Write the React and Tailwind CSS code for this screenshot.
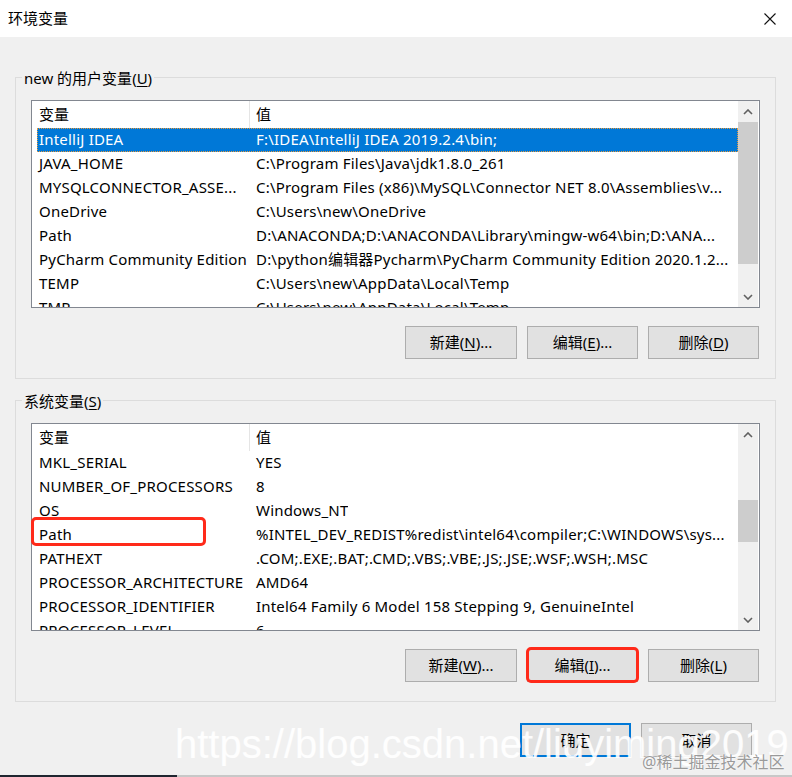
import React from "react";

const FONT = { fontFamily: "'Noto Sans', 'Noto Sans CJK SC', sans-serif" };

const userRows = [
  ["IntelliJ IDEA", "F:\\IDEA\\IntelliJ IDEA 2019.2.4\\bin;"],
  ["JAVA_HOME", "C:\\Program Files\\Java\\jdk1.8.0_261"],
  ["MYSQLCONNECTOR_ASSE...", "C:\\Program Files (x86)\\MySQL\\Connector NET 8.0\\Assemblies\\v..."],
  ["OneDrive", "C:\\Users\\new\\OneDrive"],
  ["Path", "D:\\ANACONDA;D:\\ANACONDA\\Library\\mingw-w64\\bin;D:\\ANA..."],
  ["PyCharm Community Edition", "D:\\python编辑器Pycharm\\PyCharm Community Edition 2020.1.2..."],
  ["TEMP", "C:\\Users\\new\\AppData\\Local\\Temp"],
  ["TMP", "C:\\Users\\new\\AppData\\Local\\Temp"],
];

const sysRows = [
  ["MKL_SERIAL", "YES"],
  ["NUMBER_OF_PROCESSORS", "8"],
  ["OS", "Windows_NT"],
  ["Path", "%INTEL_DEV_REDIST%redist\\intel64\\compiler;C:\\WINDOWS\\sys..."],
  ["PATHEXT", ".COM;.EXE;.BAT;.CMD;.VBS;.VBE;.JS;.JSE;.WSF;.WSH;.MSC"],
  ["PROCESSOR_ARCHITECTURE", "AMD64"],
  ["PROCESSOR_IDENTIFIER", "Intel64 Family 6 Model 158 Stepping 9, GenuineIntel"],
  ["PROCESSOR_LEVEL", "6"],
];

function Chevron({ down }) {
  return (
    <svg width="10" height="6" viewBox="0 0 10 6">
      <path
        d={down ? "M1 1 L5 5 L9 1" : "M1 5 L5 1 L9 5"}
        fill="none"
        stroke="#606060"
        strokeWidth="1.6"
      />
    </svg>
  );
}

function ScrollBar({ gapTop, thumb, gapBottom }) {
  return (
    <div className="w-[20px] h-full flex flex-col bg-[#f0f0f0]">
      <div className="h-[21px] flex items-center justify-center">
        <Chevron />
      </div>
      <div style={{ height: gapTop }} />
      <div className="bg-[#cdcdcd]" style={{ height: thumb }} />
      <div style={{ height: gapBottom }} />
      <div className="h-[21px] flex items-center justify-center">
        <Chevron down />
      </div>
    </div>
  );
}

function List({ rows, selected, scroll }) {
  return (
    <div className="w-[729px] h-[208px] border border-[#828790] bg-white flex">
      <div className="w-[706px] h-full overflow-hidden">
        <div className="h-[27px] flex items-center text-[15px] text-black">
          <div className="w-[218px] h-full border-r border-[#e5e5e5] pl-[7px] flex items-center">变量</div>
          <div className="pl-[6px]">值</div>
        </div>
        {rows.map(([k, v], i) => {
          const sel = i === selected;
          return (
            <div
              key={i}
              className={
                "ml-[5px] w-[701px] h-[24px] pb-[2px] flex items-center text-[15px] tracking-[0.2px] whitespace-nowrap " +
                (sel
                  ? "bg-[#0078d7] text-white outline outline-1 outline-dotted outline-[#e89a3c] -outline-offset-1"
                  : "text-black")
              }
            >
              <div className="w-[212px] pl-[2px] overflow-hidden">{k}</div>
              <div className="pl-[7px] overflow-hidden">{v}</div>
            </div>
          );
        })}
      </div>
      <ScrollBar {...scroll} />
      <div className="w-[1px]" />
    </div>
  );
}

function Btn({ label, mn, rest, w = "w-[111px]", extra = "" }) {
  return (
    <div
      className={
        w +
        " h-[33px] bg-[#e1e1e1] border border-[#adadad] flex items-center justify-center text-[15px] text-black " +
        extra
      }
    >
      <span>
        {label}(<span className="underline underline-offset-2">{mn}</span>){rest}
      </span>
    </div>
  );
}

function Group({ title, mn, rows, selected, scroll, buttons }) {
  return (
    <div className="w-[761px] border border-[#dcdcdc] px-[15px] pb-[19px]">
      <div className="-mt-[10px] ml-[-9px] pl-[2px] pr-[2px] h-[20px] leading-[20px] w-fit bg-[#f0f0f0] text-[15px] text-black">
        {title}(<span className="underline underline-offset-2">{mn}</span>)
      </div>
      <div className="mt-[12px]">
        <List rows={rows} selected={selected} scroll={scroll} />
      </div>
      <div className="mt-[18px] flex justify-end gap-[10px] w-[728px]">{buttons}</div>
    </div>
  );
}

export default function App() {
  return (
    <div className="relative w-[792px] h-[777px] bg-[#f0f0f0] overflow-hidden flex flex-col" style={FONT}>
      {/* title bar */}
      <div className="h-[37px] bg-white flex items-center justify-between pl-[8px] pr-[16px] shrink-0">
        <span className="text-[15px] text-black">环境变量</span>
        <svg width="12" height="12" viewBox="0 0 12 12">
          <path d="M0.5 0.5 L11.5 11.5 M11.5 0.5 L0.5 11.5" stroke="#111" strokeWidth="1.1" />
        </svg>
      </div>

      <div className="pl-[15px] pt-[40px]">
        <Group
          title="new 的用户变量"
          mn="U"
          rows={userRows}
          selected={0}
          scroll={{ gapTop: 0, thumb: 142, gapBottom: 22 }}
          buttons={[
            <Btn key="a" label="新建" mn="N" rest="..." w="w-[112px]" />,
            <Btn key="b" label="编辑" mn="E" rest="..." />,
            <Btn key="c" label="删除" mn="D" rest="" />,
          ]}
        />
        <div className="mt-[21px]">
          <Group
            title="系统变量"
            mn="S"
            rows={sysRows}
            selected={-1}
            scroll={{ gapTop: 55, thumb: 42, gapBottom: 67 }}
            buttons={[
              <Btn key="a" label="新建" mn="W" rest="..." w="w-[112px]" />,
              <Btn key="b" label="编辑" mn="I" rest="..." />,
              <Btn key="c" label="删除" mn="L" rest="" />,
            ]}
          />
        </div>
        <div className="mt-[21px] w-[761px] pr-[24px] flex justify-end gap-[10px]">
          <div className="w-[111px] h-[34px] bg-[#e1e1e1] border-2 border-[#0078d7] flex items-center justify-center text-[15px] text-black">
            确定
          </div>
          <div className="w-[111px] h-[34px] bg-[#e1e1e1] border border-[#adadad] flex items-center justify-center text-[15px] text-black">
            取消
          </div>
        </div>
      </div>

      {/* bottom strip */}
      <div className="mt-auto h-[2px] flex shrink-0">
        <div className="w-[177px] bg-[#1f2630]" />
        <div className="flex-1 bg-[#c8c8c8]" />
      </div>

      {/* annotations */}
      <div className="absolute left-[31px] top-[517px] w-[175px] h-[29px] border-[3px] border-[#ff2a1a] rounded-[5px]" />
      <div className="absolute left-[526px] top-[647px] w-[113px] h-[36px] border-[3px] border-[#ff2a1a] rounded-[5px]" />

      {/* watermarks */}
      <div
        className="absolute left-[175px] top-[724px] text-[40px] leading-[40px] text-white/90 whitespace-nowrap"
        style={{ fontFamily: "'Liberation Sans', Arial, sans-serif" }}
      >
        https://blog.csdn.net/liuyiming2019
      </div>
      <div
        className="absolute left-[642px] top-[752px] text-[16px] leading-[20px] text-[#9a9a9a] whitespace-nowrap"
        style={{ textShadow: "0 0 2px #fff, 0 0 1px #fff" }}
      >
        @稀土掘金技术社区
      </div>
    </div>
  );
}
